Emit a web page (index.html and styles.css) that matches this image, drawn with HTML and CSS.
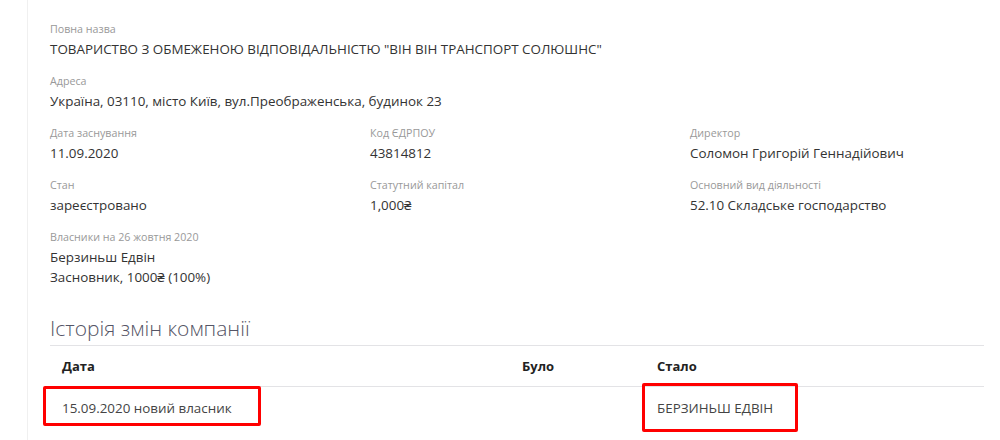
FILE: index.html
```html
<!DOCTYPE html>
<html lang="uk">
<head>
  <meta charset="UTF-8" />
  <meta name="viewport" content="width=device-width, initial-scale=1.0" />
  <title>Компанія</title>
  <link rel="stylesheet" href="styles.css">
</head>
<body>
  <div class="card">
    <div class="field">
      <div class="label">Повна назва</div>
      <div class="value">ТОВАРИСТВО З ОБМЕЖЕНОЮ ВІДПОВІДАЛЬНІСТЮ "ВІН ВІН ТРАНСПОРТ СОЛЮШНС"</div>
    </div>
    <div class="field">
      <div class="label">Адреса</div>
      <div class="value">Україна, 03110, місто Київ, вул.Преображенська, будинок 23</div>
    </div>

    <div class="grid">
      <div class="field">
        <div class="label">Дата заснування</div>
        <div class="value">11.09.2020</div>
      </div>
      <div class="field">
        <div class="label">Код ЄДРПОУ</div>
        <div class="value">43814812</div>
      </div>
      <div class="field">
        <div class="label">Директор</div>
        <div class="value">Соломон Григорій Геннадійович</div>
      </div>
      <div class="field">
        <div class="label">Стан</div>
        <div class="value">зареєстровано</div>
      </div>
      <div class="field">
        <div class="label">Статутний капітал</div>
        <div class="value">1,000₴</div>
      </div>
      <div class="field">
        <div class="label">Основний вид діяльності</div>
        <div class="value">52.10 Складське господарство</div>
      </div>
    </div>

    <div class="field">
      <div class="label">Власники на 26 жовтня 2020</div>
      <div class="value">Берзиньш Едвін</div>
      <div class="value">Засновник, 1000₴ (100%)</div>
    </div>

    <h2 class="section-title">Історія змін компанії</h2>
    <table class="history">
      <thead>
        <tr>
          <th class="col-date">Дата</th>
          <th class="col-was">Було</th>
          <th>Стало</th>
        </tr>
      </thead>
      <tbody>
        <tr>
          <td class="marked">15.09.2020 новий власник<span class="mark mark-date"></span></td>
          <td></td>
          <td class="marked">БЕРЗИНЬШ ЕДВІН<span class="mark mark-new"></span></td>
        </tr>
      </tbody>
    </table>
  </div>
</body>
</html>
```

FILE: styles.css
```css
:root {
  --text: #333;
  --muted: #999;
  --line: #e3e3e6;
  --mark: #ff0000;
}

body {
  margin: 0;
  background: #fff;
  font-family: "Open Sans", "Noto Sans", sans-serif;
  color: var(--text);
  overflow: hidden;
}

.card {
  margin-left: 27px;
  border-left: 1px solid #f0f0f0;
  padding: 20px 16px 0 22px;
  min-height: 440px;
  box-sizing: border-box;
}

.field {
  margin-bottom: 13px;
}

.label {
  font-size: 10.7px;
  line-height: 19px;
  color: var(--muted);
}

.value {
  font-size: 13.4px;
  line-height: 20px;
  color: var(--text);
}

.grid {
  display: grid;
  grid-template-columns: 320px 320px 1fr;
}

.section-title {
  margin: 27px 0 0;
  padding-bottom: 3px;
  font-size: 21px;
  line-height: 28px;
  font-weight: 300;
  color: #556;
  border-bottom: 1px solid var(--line);
}

.history {
  width: 100%;
  border-collapse: collapse;
}

.history th,
.history td {
  text-align: left;
  padding: 10px 12px;
  font-size: 13.4px;
  line-height: 20px;
}

.history th {
  font-size: 13px;
  font-weight: 700;
  color: #222;
  border-bottom: 1px solid var(--line);
}

.history td {
  color: #444;
  padding-top: 11px;
}

.col-date {
  width: 436px;
}

.col-was {
  width: 111px;
}

.marked {
  position: relative;
}

.mark {
  position: absolute;
  border: 3px solid var(--mark);
  border-radius: 2px;
  box-sizing: border-box;
}

.mark-date {
  left: -7px;
  top: -1px;
  width: 218px;
  height: 40px;
}

.mark-new {
  left: -3px;
  top: -4px;
  width: 156px;
  height: 49px;
}
```
